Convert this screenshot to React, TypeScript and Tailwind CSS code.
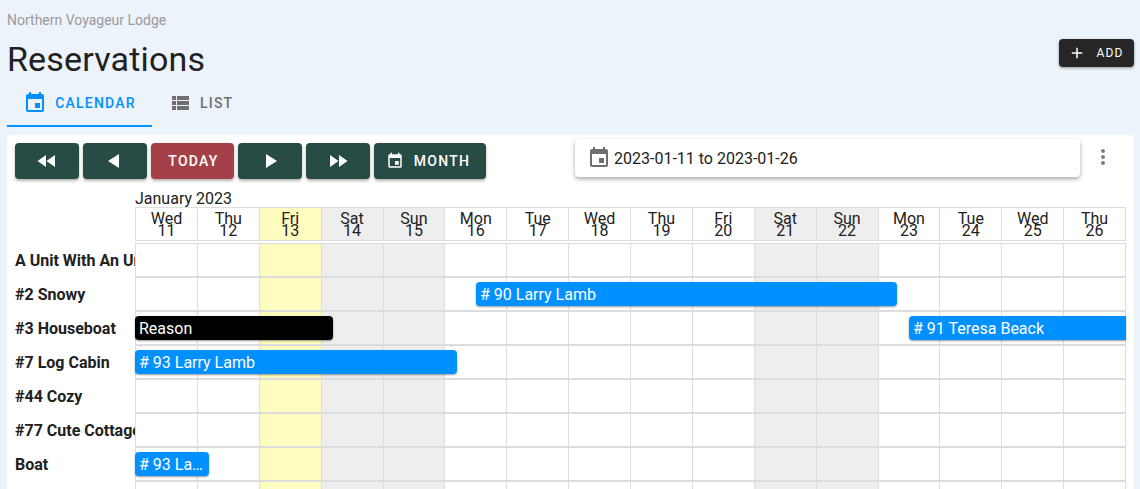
const days = [
  ["Wed", "11"], ["Thu", "12"], ["Fri", "13"], ["Sat", "14"], ["Sun", "15"], ["Mon", "16"], ["Tue", "17"], ["Wed", "18"],
  ["Thu", "19"], ["Fri", "20"], ["Sat", "21"], ["Sun", "22"], ["Mon", "23"], ["Tue", "24"], ["Wed", "25"], ["Thu", "26"],
]

const units = [
  { name: "A Unit With An Unusually Long Name", bookings: [] },
  { name: "#2 Snowy", bookings: [{ label: "# 90 Larry Lamb", left: 341, width: 421, color: "bg-[#0090ff]" }] },
  {
    name: "#3 Houseboat",
    bookings: [
      { label: "Reason", left: 0, width: 198, color: "bg-black" },
      { label: "# 91 Teresa Beack", left: 774, width: 217, color: "bg-[#0090ff] rounded-r-none" },
    ],
  },
  { name: "#7 Log Cabin", bookings: [{ label: "# 93 Larry Lamb", left: 0, width: 322, color: "bg-[#0090ff]" }] },
  { name: "#44 Cozy", bookings: [] },
  { name: "#77 Cute Cottage", bookings: [] },
  { name: "Boat", bookings: [{ label: "# 93 Larry Lamb", left: 0, width: 74, color: "bg-[#0090ff]" }] },
  { name: "", bookings: [] },
]

function shade(i: number) {
  if (i === 2) return "bg-[#fffcbf]"
  if (i === 3 || i === 4 || i === 10 || i === 11) return "bg-[#eeeeee]"
  return "bg-white"
}

function Icon({ d, className }: { d: string; className: string }) {
  return (
    <svg viewBox="0 0 24 24" fill="currentColor" className={className}>
      <path d={d} />
    </svg>
  )
}

const eventIcon =
  "M17 12h-5v5h5v-5zM16 1v2H8V1H6v2H5c-1.11 0-1.99.9-1.99 2L3 19c0 1.1.89 2 2 2h14c1.1 0 2-.9 2-2V5c0-1.1-.9-2-2-2h-1V1h-2zm3 18H5V8h14v11z"
const listIcon = "M4 14h4v-4H4v4zm0 5h4v-4H4v4zM4 9h4V5H4v4zm5 5h12v-4H9v4zm0 5h12v-4H9v4zM9 5v4h12V5H9z"
const rewindIcon = "M11 18V6l-8.5 6 8.5 6zm.5-6l8.5 6V6l-8.5 6z"
const forwardIcon = "M4 18l8.5-6L4 6v12zm9-12v12l8.5-6L13 6z"
const playIcon = "M8 5v14l11-7z"
const backIcon = "M16 5v14L5 12z"
const addIcon = "M19 13h-6v6h-2v-6H5v-2h6V5h2v6h6v2z"
const moreIcon =
  "M12 8c1.1 0 2-.9 2-2s-.9-2-2-2-2 .9-2 2 .9 2 2 2zm0 2c-1.1 0-2 .9-2 2s.9 2 2 2 2-.9 2-2-.9-2-2-2zm0 6c-1.1 0-2 .9-2 2s.9 2 2 2 2-.9 2-2-.9-2-2-2z"

const btn =
  "h-9 rounded flex items-center justify-center text-white shadow-[0_2px_3px_rgba(0,0,0,0.3)] text-[14px] font-medium tracking-[0.09em]"

export default function App() {
  return (
    <div className="h-screen overflow-hidden bg-[#ecf3fa] font-['Roboto',sans-serif] text-[#212121]">
      {/* Page header */}
      <div className="flex items-start justify-between pl-[7px] pr-[6px]">
        <div>
          <div className="pt-[12px] text-[14px] leading-[16px] text-[#9a9a9a]">Northern Voyageur Lodge</div>
          <h1 className="mt-[6px] text-[34px] leading-[50px] tracking-[0.005em] font-normal">Reservations</h1>
        </div>
        <button className="mt-[39px] h-7 w-[75px] rounded bg-[#262626] text-white flex items-center justify-center gap-[11px] pr-[2px] text-[12px] tracking-[0.09em] shadow-[0_1px_3px_rgba(0,0,0,0.4)]">
          <Icon d={addIcon} className="w-[18px] h-[18px]" />
          ADD
        </button>
      </div>

      {/* Tabs */}
      <div className="ml-[7px] flex h-[48px] -mt-[5px]">
        <div className="w-[145px] pt-[2px] flex items-center justify-center gap-2 border-b-2 border-[#0090ff] text-[#0090ff] text-[14px] font-medium tracking-[0.085em]">
          <Icon d={eventIcon} className="w-6 h-6" />
          CALENDAR
        </div>
        <div className="ml-4 flex items-center gap-2 text-[#6f6f6f] text-[14px] font-medium tracking-[0.085em]">
          <Icon d={listIcon} className="w-6 h-6" />
          LIST
        </div>
      </div>

      {/* Calendar panel */}
      <div className="mt-[8px] ml-[7px] mr-[6px] bg-white rounded-t pt-[4px] px-[8px]">
        <div className="flex items-start gap-1">
          <div className="flex gap-1 pt-[4px]">
            <button className={`${btn} w-16 bg-[#274b45]`}>
              <Icon d={rewindIcon} className="w-6 h-6" />
            </button>
            <button className={`${btn} w-16 bg-[#274b45]`}>
              <Icon d={backIcon} className="w-6 h-6" />
            </button>
            <button className={`${btn} w-[83px] bg-[#a44148] pl-[2px]`}>TODAY</button>
            <button className={`${btn} w-16 bg-[#274b45]`}>
              <Icon d={playIcon} className="w-6 h-6" />
            </button>
            <button className={`${btn} w-16 bg-[#274b45]`}>
              <Icon d={forwardIcon} className="w-6 h-6" />
            </button>
            <button className={`${btn} w-[112px] bg-[#274b45] gap-[10px] pr-[4px]`}>
              <Icon d={eventIcon} className="w-[18px] h-[18px]" />
              MONTH
            </button>
          </div>
          <div className="ml-[85px] w-[505px] h-[38px] rounded bg-white shadow-[0_2px_4px_rgba(0,0,0,0.35)] flex items-center gap-[3px] pl-3 text-[16px]">
            <Icon d={eventIcon} className="w-6 h-6 text-[#6e6e6e]" />
            <span className="mt-[2px]">2023-01-11 to 2023-01-26</span>
          </div>
          <div className="ml-[7px] pt-[6px] text-[#7f7f7f]">
            <Icon d={moreIcon} className="w-6 h-6" />
          </div>
        </div>

        <div className="pl-[120px] mt-[10px] pt-[1px] text-[16px] leading-[17px]">January 2023</div>

        {/* Day header */}
        <div className="flex">
          <div className="w-[120px] shrink-0" />
          <div className="w-[991px] grid grid-cols-[repeat(16,1fr)] border-y border-l border-[#dddddd] h-[34px]">
            {days.map(([name, num], i) => (
              <div key={i} className={`border-r border-[#dddddd] text-center text-[16px] leading-[11.5px] pt-[5px] ${shade(i)}`}>
                <div>{name}</div>
                <div>{num}</div>
              </div>
            ))}
          </div>
        </div>

        {/* Unit rows */}
        <div className="mt-[2px]">
          {units.map((unit) => (
            <div key={unit.name} className="flex h-[34px]">
              <div className="w-[120px] shrink-0 pt-[1px] flex items-center text-[16px] font-bold whitespace-nowrap overflow-hidden">
                {unit.name}
              </div>
              <div className="relative w-[991px] grid grid-cols-[repeat(16,1fr)] border-y border-l border-[#dddddd]">
                {days.map((_, i) => (
                  <div key={i} className={`border-r border-[#dddddd] ${shade(i)}`} />
                ))}
                {unit.bookings.map((b) => (
                  <div
                    key={b.label}
                    className={`absolute top-[4px] h-6 rounded px-1 text-white text-[16px] leading-[25px] truncate shadow-[0_1px_2px_rgba(0,0,0,0.4)] ${b.color}`}
                    style={{ left: b.left - 1, width: b.width }}
                  >
                    {b.label}
                  </div>
                ))}
              </div>
            </div>
          ))}
        </div>
      </div>
    </div>
  )
}
